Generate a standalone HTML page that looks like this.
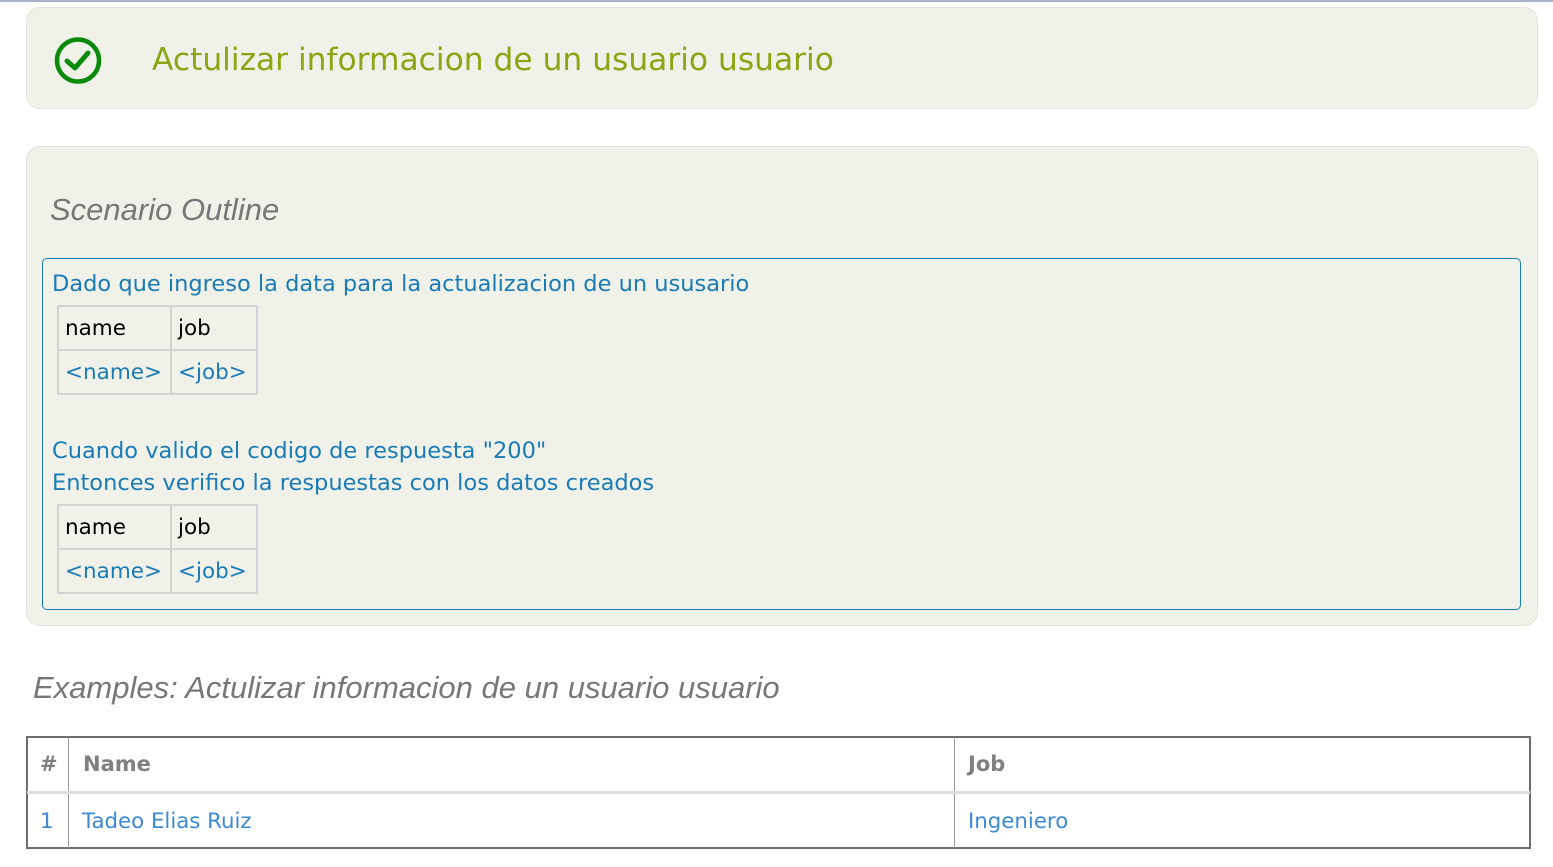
<!DOCTYPE html>
<html><head><meta charset="utf-8"><style>
body{margin:0;width:1553px;height:867px;background:#fff;position:relative;overflow:hidden;font-family:"DejaVu Sans",Verdana,sans-serif}
.abs{position:absolute}
.box{background:#f0f1e9;border:1px solid #e2e4da;border-radius:14px}
.blue{color:#1a7bb5}
table.g{border-collapse:collapse;font-size:21.5px}
table.g td{border:2px solid #d3d3d3;padding:0 6px;height:42px;white-space:nowrap}
</style></head><body>
<div class="abs" style="left:0;top:0;width:1553px;height:2px;background:#a9b2c8"></div>
<div class="abs box" style="left:26px;top:7px;width:1510px;height:100px"></div>
<svg class="abs" style="left:53px;top:36px" width="50" height="50" viewBox="0 0 50 50"><circle cx="25" cy="24.5" r="21" fill="none" stroke="#0a8a0a" stroke-width="4.5"/><path d="M14 25 L22 32 L35 17" fill="none" stroke="#0a8a0a" stroke-width="5" stroke-linecap="round" stroke-linejoin="round"/></svg>
<div class="abs" style="left:152px;top:42px;font-size:31.3px;color:#8aa614;white-space:nowrap">Actulizar informacion de un usuario usuario</div>

<div class="abs box" style="left:26px;top:146px;width:1510px;height:478px"></div>
<div class="abs" style="left:50px;top:192px;font-family:'Liberation Sans',Arial,sans-serif;font-style:italic;font-size:31px;color:#777">Scenario Outline</div>
<div class="abs" style="left:42px;top:258px;width:1477px;height:350px;border:1px solid #1a7bb5;border-radius:5px"></div>
<div class="abs blue" style="left:52px;top:271px;font-size:22.5px;white-space:nowrap">Dado que ingreso la data para la actualizacion de un ususario</div>
<table class="g abs" style="left:57px;top:305px"><tr><td style="width:99px">name</td><td style="width:72px">job</td></tr><tr><td class="blue">&lt;name&gt;</td><td class="blue">&lt;job&gt;</td></tr></table>
<div class="abs blue" style="left:52px;top:438px;font-size:22.5px;white-space:nowrap">Cuando valido el codigo de respuesta "200"</div>
<div class="abs blue" style="left:52px;top:470px;font-size:22.5px;white-space:nowrap">Entonces verifico la respuestas con los datos creados</div>
<table class="g abs" style="left:57px;top:504px"><tr><td style="width:99px">name</td><td style="width:72px">job</td></tr><tr><td class="blue">&lt;name&gt;</td><td class="blue">&lt;job&gt;</td></tr></table>

<div class="abs" style="left:33px;top:670px;font-family:'Liberation Sans',Arial,sans-serif;font-style:italic;font-size:31px;color:#777;white-space:nowrap">Examples: Actulizar informacion de un usuario usuario</div>

<div class="abs" style="left:26px;top:736px;width:1501px;height:109px;border:2px solid #6e6e6e"></div>
<div class="abs" style="left:68px;top:737px;width:1px;height:111px;background:#999"></div>
<div class="abs" style="left:954px;top:737px;width:1px;height:111px;background:#999"></div>
<div class="abs" style="left:27px;top:791px;width:1503px;height:3px;background:#ddd"></div>
<div class="abs" style="left:40px;top:752px;font-size:21px;font-weight:bold;color:#808080">#</div>
<div class="abs" style="left:83px;top:752px;font-size:21px;font-weight:bold;color:#808080">Name</div>
<div class="abs" style="left:968px;top:752px;font-size:21px;font-weight:bold;color:#808080">Job</div>
<div class="abs" style="left:40px;top:809px;font-size:21.3px;color:#3d8ad1">1</div>
<div class="abs" style="left:82px;top:809px;font-size:21.3px;color:#3d8ad1">Tadeo Elias Ruiz</div>
<div class="abs" style="left:968px;top:809px;font-size:21.3px;color:#3d8ad1">Ingeniero</div>
</body></html>
